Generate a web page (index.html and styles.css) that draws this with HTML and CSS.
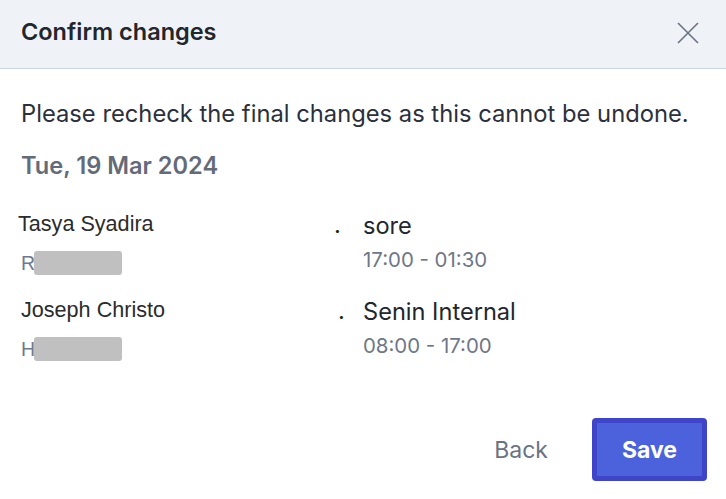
FILE: index.html
```html
<!DOCTYPE html>
<html>
<head>
<meta charset="utf-8">
<link rel="stylesheet" href="styles.css">
</head>
<body>
<div class="dialog">
  <div class="header">
    <div class="title">Confirm changes</div>
    <button class="close" aria-label="Close">
      <svg width="22" height="22" viewBox="0 0 22 22"><path d="M1 1 L21 21 M21 1 L1 21" stroke="#6b7280" stroke-width="1.6" fill="none"/></svg>
    </button>
  </div>
  <div class="body">
    <p class="msg">Please recheck the final changes as this cannot be undone.</p>
    <div class="date">Tue, 19 Mar 2024</div>
    <div class="rows">
      <div class="row row-a">
        <div class="person">
          <div class="name">Tasya Syadira</div>
          <div class="sub"><span class="initial">R</span><span class="blur"></span></div>
        </div>
        <div class="dot">.</div>
        <div class="shift">
          <div class="shift-name">sore</div>
          <div class="time">17:00 - 01:30</div>
        </div>
      </div>
      <div class="row row-b">
        <div class="person">
          <div class="name">Joseph Christo</div>
          <div class="sub"><span class="initial">H</span><span class="blur"></span></div>
        </div>
        <div class="dot">.</div>
        <div class="shift">
          <div class="shift-name">Senin Internal</div>
          <div class="time">08:00 - 17:00</div>
        </div>
      </div>
    </div>
  </div>
  <div class="footer">
    <button class="back">Back</button>
    <button class="save">Save</button>
  </div>
</div>
</body>
</html>
```
FILE: styles.css
```css
* { box-sizing: border-box; }
html, body { margin: 0; padding: 0; background: #fff; }
body { font-family: Inter, "Noto Sans", sans-serif; width: 726px; height: 499px; overflow: hidden; }
.dialog { width: 726px; }
.header {
  height: 69px;
  background: #eff3f8;
  border-bottom: 1px solid #cdd5df;
  display: flex;
  align-items: center;
  justify-content: space-between;
  padding: 0 27px 4px 21px;
}
.title { font-size: 23.5px; line-height: 28px; font-weight: 600; color: #23262b; }
.close { background: none; border: 0; padding: 0; width: 22px; height: 22px; display: flex; margin-top: 2px; }
.body { padding: 0 21px; }
.msg { margin: 31px 0 0; font-size: 23.75px; line-height: 28px; color: #2b303b; }
.date { margin-top: 24px; font-size: 23.6px; line-height: 28px; font-weight: 600; color: #636b7a; }
.rows { margin-top: 31px; display: flex; flex-direction: column; gap: 22px; }
.row { display: flex; align-items: flex-start; }
.person { width: 313px; font-family: "Liberation Sans", Arial, sans-serif; }
.row-a .person { margin-left: -3px; width: 316px; }
.name { font-size: 21.6px; line-height: 26px; color: #2b2b2b; }
.sub { margin-top: 14px; height: 24px; display: flex; align-items: center; }
.row-a .sub { margin-left: 3px; }
.initial { font-size: 19.5px; color: #6b7a90; }
.blur { display: inline-block; width: 88px; height: 24px; background: #c0c0c0; border-radius: 3px; margin-left: -1px; }
.dot { width: 29px; font-size: 23.6px; line-height: 28px; color: #222; }
.row-b .dot { padding-left: 4px; }
.shift { padding-top: 1px; }
.shift-name { font-size: 23.6px; line-height: 28px; color: #23262b; }
.time { margin-top: 8px; font-size: 20.4px; line-height: 24px; color: #6e7787; }
.footer {
  margin-top: 57px;
  display: flex;
  justify-content: flex-end;
  align-items: center;
  padding-right: 19px;
}
.back {
  background: none; border: 0; font-family: inherit;
  font-size: 23px; color: #6b7280; padding: 0 44px 0 0;
}
.save {
  width: 115px; height: 63px;
  background: #4b62dc;
  border: 5px solid #3f45c9;
  border-radius: 4px;
  color: #fff; font-family: inherit; font-size: 23px; font-weight: 700;
}
```
